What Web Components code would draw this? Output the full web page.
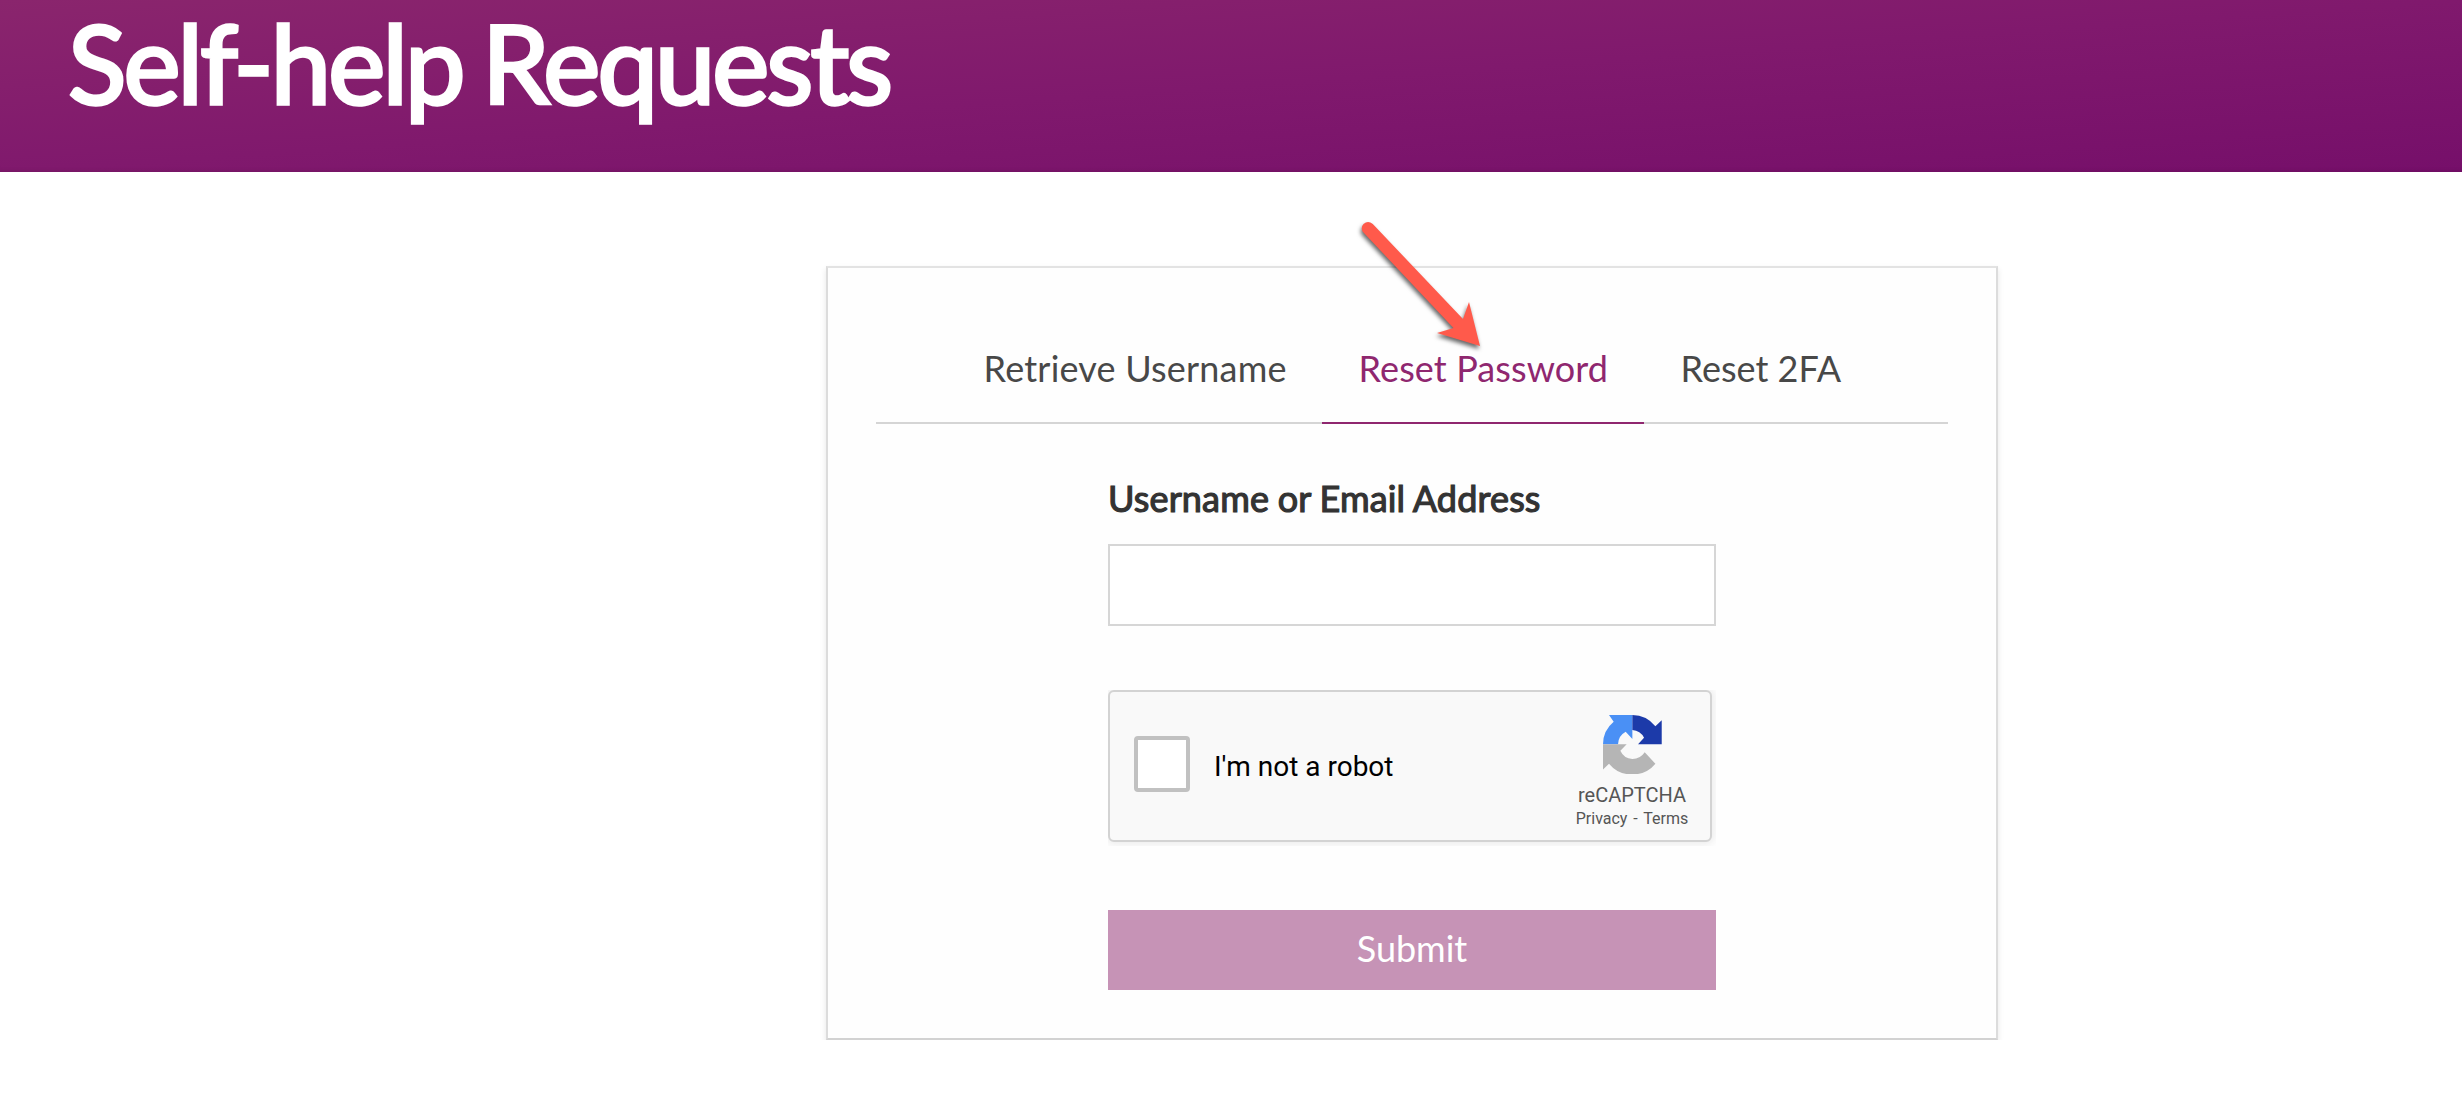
<!DOCTYPE html>
<html lang="en">
<head>
<meta charset="utf-8">
<title>Self-help Requests</title>
<style>
  body { margin: 0; background: #fff; font-family: Lato, sans-serif; }
</style>
</head>
<body>
<page-header>Self-help Requests</page-header>
<form-card>
  <tab-bar slot="tabs">
    <tab-item style="--w:375px;letter-spacing:.2px">Retrieve Username</tab-item>
    <tab-item style="--w:322px;letter-spacing:.1px" active>Reset Password</tab-item>
    <tab-item style="--w:233px">Reset 2FA</tab-item>
  </tab-bar>
  <text-field>Username or Email Address</text-field>
  <captcha-box></captcha-box>
  <submit-button>Submit</submit-button>
</form-card>
<pointer-arrow></pointer-arrow>
<script>
const define = (name, html) => customElements.define(name, class extends HTMLElement {
  constructor() {
    super();
    this.attachShadow({ mode: 'open' }).innerHTML = html;
  }
});

define('page-header', `
  <style>
    :host { display: block; height: 172px; box-sizing: border-box; padding-left: 68px;
      background: linear-gradient(to bottom right, #8a256d, #80196d 50%, #760f6a);
      box-shadow: inset 0 -5px 5px -5px rgba(60,0,50,.25); }
    h1 { margin: 0; font-weight: 400; font-size: 108px; line-height: 124px; letter-spacing: -2.87px; word-spacing: -5.5px;
      color: #fff; -webkit-text-stroke: 3.4px #fff; white-space: nowrap; }
  </style>
  <h1><slot></slot></h1>`);

define('form-card', `
  <style>
    :host { display: flex; flex-direction: column; box-sizing: border-box; width: 1172px; height: 774px;
      margin: 94px 0 0 826px; padding: 78px 48px 48px; background: #fefefe;
      border: 2px solid; border-color: #e3e3e3 #dcdcdc #d2d2d2;
      box-shadow: 0 3px 6px rgba(0,0,0,.1); }
    .form { width: 608px; margin: 52px auto 0; display: flex; flex-direction: column; gap: 64px; }
  </style>
  <slot name="tabs"></slot>
  <div class="form"><slot></slot></div>`);

define('tab-bar', `
  <style>
    :host { display: flex; justify-content: center; height: 76px; border-bottom: 2px solid #d5d5d5; }
  </style>
  <slot></slot>`);

define('tab-item', `
  <style>
    :host { display: block; box-sizing: border-box; width: var(--w); height: 78px; padding-left: 36.6px;
      font-size: 36px; line-height: 44px; color: #484848; white-space: nowrap;
      border-bottom: 2px solid transparent; }
    :host([active]) { color: #8f276f; border-bottom-color: #8f276f; }
  </style>
  <slot></slot>`);

define('text-field', `
  <style>
    :host { display: flex; flex-direction: column; gap: 24px; }
    label { font-size: 36px; line-height: 44px; color: #333; -webkit-text-stroke: 1.2px #333; white-space: nowrap;
      letter-spacing: .14px; word-spacing: -.6px; }
    input { display: block; box-sizing: border-box; width: 100%; height: 82px; margin: 0; padding: 0 16px;
      border: 2px solid #d6d6d6; border-radius: 0; background: #fff; font: 36px Lato, sans-serif; outline: 0; }
  </style>
  <label for="f"><slot></slot></label>
  <input id="f" type="text">`);

define('captcha-box', `
  <style>
    :host { display: block; width: 608px; height: 156px; overflow: hidden; font-family: Roboto, sans-serif; }
    .box { display: flex; box-sizing: border-box; width: 604px; height: 152px; background: #f9f9f9;
      border: 2px solid #d3d3d3; border-radius: 6px; box-shadow: 0 0 8px 2px rgba(0,0,0,.08); }
    .check { box-sizing: border-box; width: 56px; height: 56px; margin: 44px 24px 0 24px;
      border: 4px solid #c1c1c1; border-radius: 4px; background: #fff; }
    .text { flex: 1; margin-top: 58px; font-size: 28px; line-height: 33px; color: #000; white-space: nowrap; }
    .brand { width: 156px; display: flex; flex-direction: column; align-items: center; color: #555; padding-top: 22.5px; box-sizing: border-box; }
    svg { display: block; width: 59.4px; height: 59.4px; margin-left: 1px; }
    .name { font-size: 20px; line-height: 24px; margin-top: 9px; }
    .links { font-size: 16px; line-height: 19px; margin-top: 2px; word-spacing: 1.9px; white-space: nowrap; }
  </style>
  <div class="box">
    <div class="check"></div>
    <div class="text">I'm not a robot</div>
    <div class="brand">
      <svg viewBox="0 0 178 178">
        <path fill="#4a90f5" d="M18 0H88V72L68 50A44 44 0 0 0 45 88H0A88 88 0 0 1 32 20Z"/>
        <path fill="#1c3aa9" d="M88 0A88 88 0 0 1 157 34L176 16V88H105L123 68A43 43 0 0 0 88 45Z"/>
        <path fill="#b5b5b5" d="M0 88H71L52 107A43 43 0 0 0 88 132A44 44 0 0 0 125 112L157 146A88 88 0 0 1 88 178A88 88 0 0 1 18 146L0 163Z"/>
      </svg>
      <div class="name">reCAPTCHA</div>
      <div class="links">Privacy - Terms</div>
    </div>
  </div>`);

define('submit-button', `
  <style>
    :host { display: flex; }
    button { flex: 1; height: 80px; padding: 0 0 4px; border: 0; background: #c693b6; color: #fff;
      font: 36px/44px Lato, sans-serif; }
  </style>
  <button type="button"><slot></slot></button>`);

define('pointer-arrow', `
  <style>
    :host { position: absolute; left: 1350px; top: 210px; width: 150px; height: 150px; pointer-events: none; }
    svg { display: block; filter: drop-shadow(-1px 3px 2px rgba(0,0,0,.6)); }
  </style>
  <svg width="150" height="150" viewBox="0 0 150 150">
    <path fill="#ff5a4b" d="M13.5 22.5A6 6 0 0 1 13.5 14Q18 10 22.8 14L113 109L119 92L130 136L87 123L103.500 118Z"/>
  </svg>`);
</script>
</body>
</html>
